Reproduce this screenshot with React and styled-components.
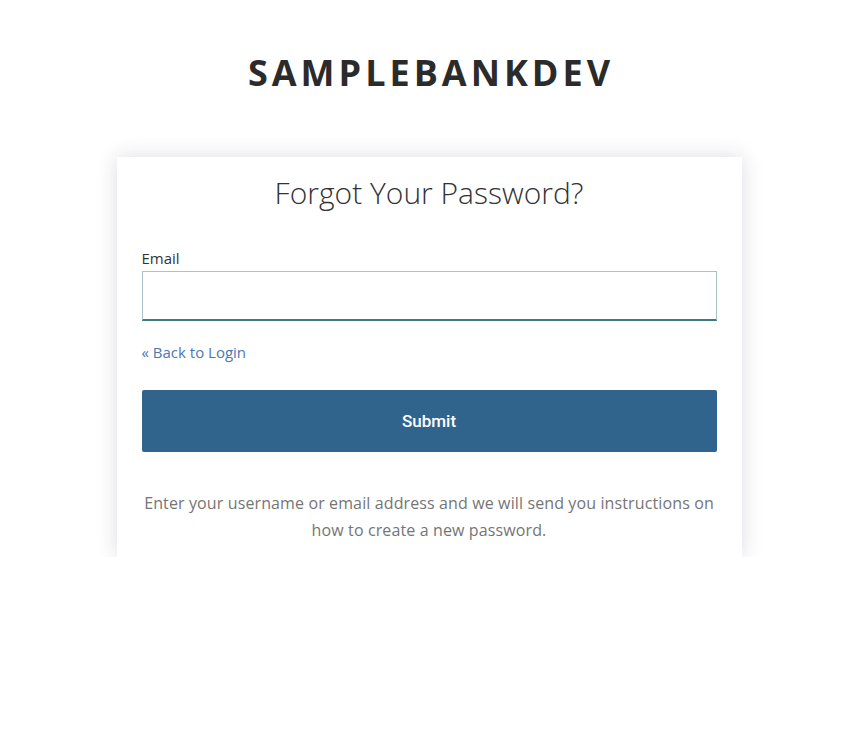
import React from "react";
import styled, { createGlobalStyle } from "styled-components";

const Global = createGlobalStyle`
  html, body { margin: 0; padding: 0; background: #fff; }
  body { font-family: "Open Sans", "Liberation Sans", sans-serif; color: #333; }
  * { box-sizing: border-box; }
`;

const Page = styled.div`
  display: flex;
  flex-direction: column;
  align-items: center;
  padding-top: 50px;
`;

const Brand = styled.h1`
  margin: 0;
  font-family: "Open Sans", sans-serif;
  font-weight: 700;
  font-size: 36px;
  line-height: 46px;
  letter-spacing: 4px;
  color: #2b2b2b;
  padding-left: 4px;
`;

const Card = styled.div`
  margin-top: 61px;
  width: 625px;
  background: #fff;
  box-shadow: 0 0 20px rgba(40, 40, 80, 0.16);
  padding: 14px 25px 13px;
  display: flex;
  flex-direction: column;
`;

const Title = styled.h2`
  margin: 0;
  text-align: center;
  font-weight: 300;
  font-size: 30px;
  line-height: 44px;
  color: #333;
`;

const Label = styled.label`
  margin-top: 33px;
  font-size: 15px;
  line-height: 20px;
  color: #333;
`;

const Input = styled.input`
  margin-top: 3px;
  height: 50px;
  width: 100%;
  border: 1px solid #a9c3c6;
  border-bottom: 2px solid #3f7a80;
  padding: 0 10px;
  font-family: inherit;
  font-size: 16px;
  outline: none;
  caret-color: #000;
`;

const BackLink = styled.a`
  margin-top: 21px;
  font-size: 15px;
  line-height: 20px;
  color: #4a78b4;
  text-decoration: none;
  align-self: flex-start;
`;

const Submit = styled.button`
  margin-top: 28px;
  height: 62px;
  width: 100%;
  border: none;
  border-radius: 2px;
  background: #31648c;
  color: #fff;
  font-family: "Roboto", "Noto Sans", sans-serif;
  font-weight: 500;
  font-size: 17px;
  cursor: pointer;
`;

const Info = styled.p`
  margin: 38px 0 0;
  text-align: center;
  font-size: 16px;
  line-height: 27px;
  letter-spacing: 0.12px;
  color: #757575;
`;

export default function App() {
  return (
    <>
      <Global />
      <Page>
        <Brand>SAMPLEBANKDEV</Brand>
        <Card>
          <Title>Forgot Your Password?</Title>
          <Label htmlFor="email">Email</Label>
          <Input id="email" type="text" autoFocus />
          <BackLink href="#">« Back to Login</BackLink>
          <Submit type="button">Submit</Submit>
          <Info>
            Enter your username or email address and we will send you instructions on how to create a new password.
          </Info>
        </Card>
      </Page>
    </>
  );
}
